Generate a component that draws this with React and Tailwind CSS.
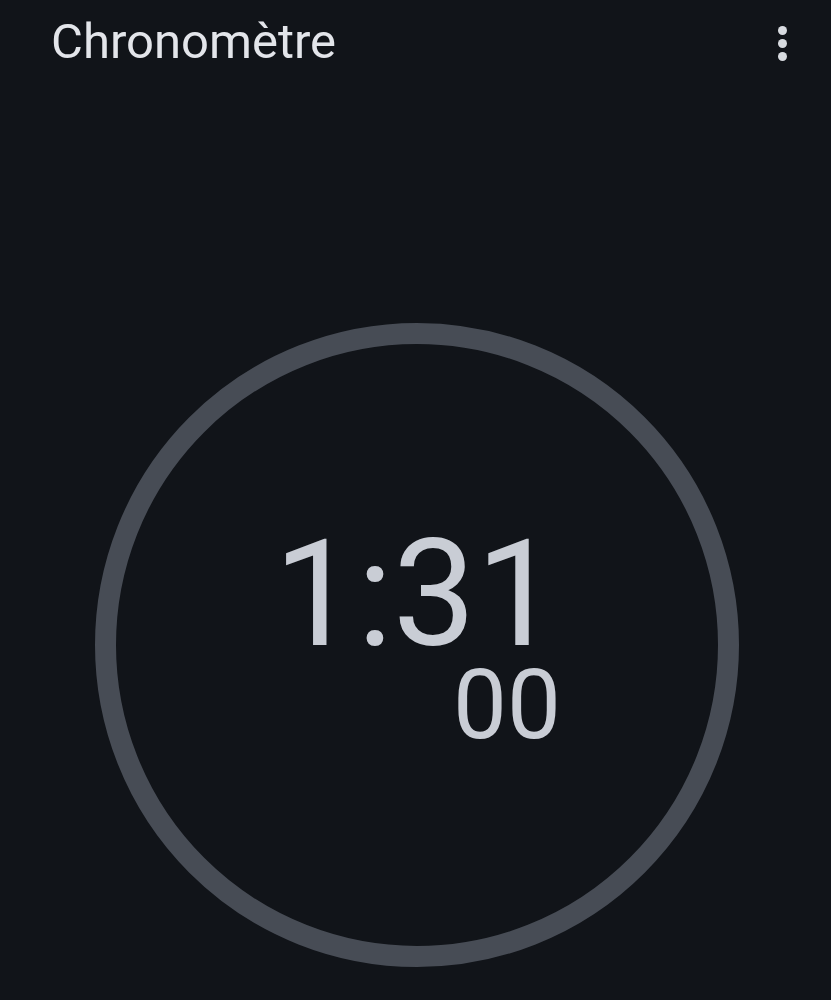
export default function App() {
  return (
    <div
      className="w-[831px] h-[1000px] bg-[#111419] overflow-hidden"
      style={{ fontFamily: "Roboto, 'Open Sans', sans-serif" }}
    >
      <header className="flex items-start justify-between pl-[51px] pr-[44px] pt-[12px]">
        <h1 className="text-[49px] leading-[60px] text-[#e3e5ea]">Chronomètre</h1>
        <div className="flex flex-col gap-[4px] pt-[14px]">
          <span className="w-[9px] h-[9px] rounded-full bg-[#d8dbe0]" />
          <span className="w-[9px] h-[9px] rounded-full bg-[#d8dbe0]" />
          <span className="w-[9px] h-[9px] rounded-full bg-[#d8dbe0]" />
        </div>
      </header>
      <div className="flex justify-center pt-[251px] pl-[2px]">
        <div className="w-[644px] h-[644px] rounded-full border-[21px] border-[#474c55] flex flex-col items-center justify-center">
          <div className="text-[148px] leading-[110px] text-[#c9cdd5] -mt-[10px]">1:31</div>
          <div className="text-[96px] leading-[70px] text-[#c9cdd5] pl-[181px] mt-[20px]">00</div>
        </div>
      </div>
    </div>
  );
}
